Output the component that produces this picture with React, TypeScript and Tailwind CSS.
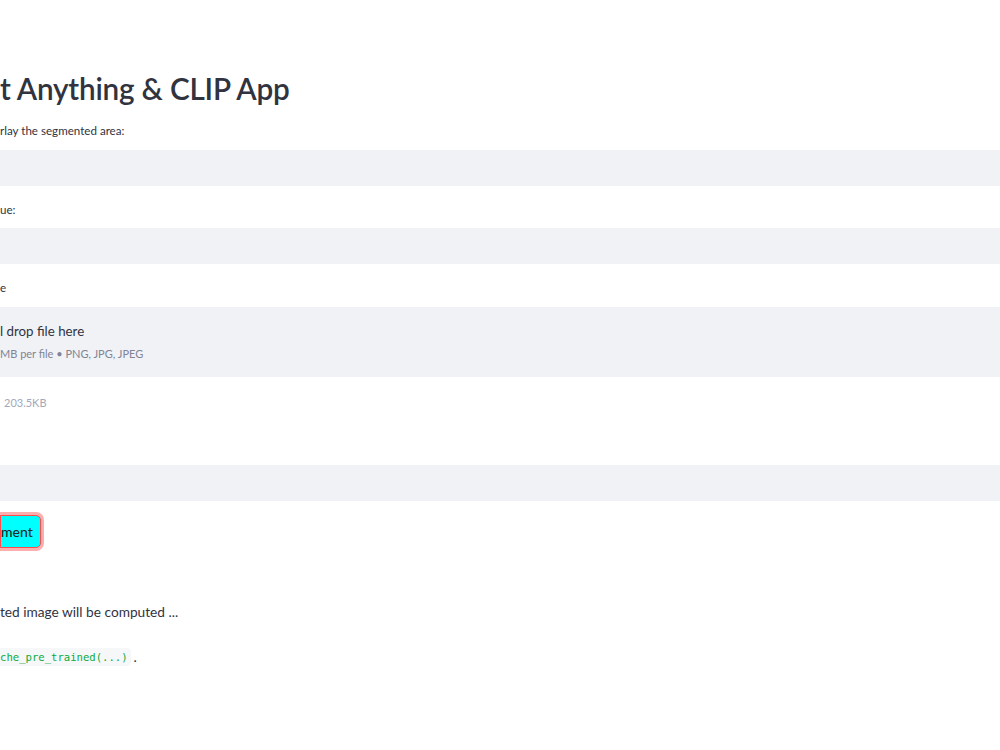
export default function App() {
  return (
    <div className="min-h-[750px] w-full bg-white text-[#31333f]" style={{ fontFamily: 'Lato, "Noto Sans", sans-serif' }}>
      <div className="flex flex-col pt-[69px]">
        <h1 className="h-[40px] text-[29.7px] font-semibold leading-[40px] tracking-[-0.2px] whitespace-nowrap">
          t Anything &amp; CLIP App
        </h1>

        <label className="mt-[14px] h-[16px] text-[11.6px] leading-[16px] text-[#31333f]">rlay the segmented area:</label>
        <div className="mt-[11px] h-[36px] w-full bg-[#f0f2f6]" />

        <label className="mt-[16px] h-[16px] text-[11.6px] leading-[16px]">ue:</label>
        <div className="mt-[10px] h-[36px] w-full bg-[#f0f2f6]" />

        <label className="mt-[16px] h-[16px] text-[11.6px] leading-[16px]">e</label>
        <div className="mt-[11px] flex h-[70px] w-full flex-col bg-[#f0f2f6] pt-[14px]">
          <span className="text-[13.3px] leading-[20px] text-[#31333f]">l drop file here</span>
          <span className="mt-[5px] text-[11px] leading-[16px] text-[#808495]">MB per file • PNG, JPG, JPEG</span>
        </div>

        <div className="mt-[18px] h-[16px] pl-[4px] text-[11px] leading-[16px] text-[#a3a8b8]">203.5KB</div>

        <div className="mt-[54px] h-[36px] w-full bg-[#f0f2f6]" />

        <div className="mt-[14px] flex">
          <button className="flex h-[33px] items-center rounded-r-[5px] border border-[#ff4b4b] bg-[#00ffff] pr-[7px] text-[14px] font-medium text-[#1f2a2a] shadow-[0_0_0_3px_rgba(255,75,75,0.45)]">
            ment
          </button>
        </div>

        <p className="mt-[53px] h-[22px] text-[13.7px] leading-[22px] text-[#31333f]">ted image will be computed ...</p>

        <div className="mt-[23px] flex items-center text-[14px]">
          <code
            className="rounded-r-[4px] bg-[#f6f7f9] pr-[3px] py-[1px] text-[10.6px] leading-[16px] text-[#09ab3b]"
            style={{ fontFamily: '"DejaVu Sans Mono", "Liberation Mono", monospace' }}
          >
            che_pre_trained(...)
          </code>
          <span className="ml-[3px] text-[#31333f]">.</span>
        </div>
      </div>
    </div>
  );
}
